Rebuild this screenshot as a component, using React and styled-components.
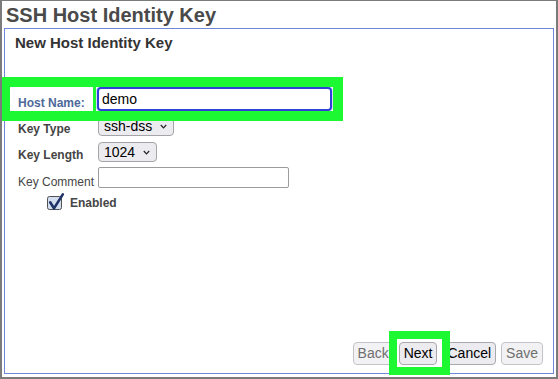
import React from "react";
import styled, { createGlobalStyle } from "styled-components";

const GlobalStyle = createGlobalStyle`
  html, body { margin: 0; padding: 0; background: #fff; }
  body { font-family: "Liberation Sans", Arial, sans-serif; }
  * { box-sizing: border-box; }
`;

const GREEN = "#1cf932";

const Frame = styled.div`
  width: 558px;
  height: 379px;
  border-style: solid;
  border-color: #7b7b7b;
  border-width: 1px 2px 2px 2px;
  display: flex;
  flex-direction: column;
  background: #fff;
  overflow: hidden;
`;

const Title = styled.h1`
  margin: 0;
  padding: 1px 0 0 4px;
  height: 27px;
  font-size: 20px;
  line-height: 26px;
  font-weight: bold;
  color: #4a4a4a;
  white-space: nowrap;
`;

const Panel = styled.section`
  flex: 1;
  margin: 0 2px 3px 2px;
  border: 1px solid #6f85d6;
  display: flex;
  flex-direction: column;
  min-height: 0;
`;

const Subtitle = styled.h2`
  margin: 0;
  padding: 5px 0 0 10px;
  font-size: 15px;
  line-height: 17px;
  font-weight: bold;
  color: #333;
`;

const Form = styled.div`
  margin-top: 36px;
  padding-left: 13px;
  display: flex;
  flex-direction: column;
`;

const Row = styled.div`
  position: relative;
  display: flex;
  align-items: center;
  height: ${(p) => p.$h}px;
  margin-top: ${(p) => p.$mt || 0}px;
`;

const Label = styled.span`
  width: 80px;
  flex: none;
  padding-top: ${(p) => p.$drop || 0}px;
  font-size: 12px;
  font-weight: ${(p) => (p.$normal ? "normal" : "bold")};
  color: ${(p) => (p.$accent ? "#4d6a99" : "#454545")};
  white-space: nowrap;
`;

const HostInput = styled.input`
  width: 235px;
  height: 24px;
  margin-left: -1px;
  padding: 0 0 0 3px;
  border: 2px solid #2f3fd8;
  border-radius: 4px;
  box-shadow: 0 0 0 1px #d6dcf6;
  font-family: inherit;
  font-size: 14px;
  color: #000;
  background: #fff;
  outline: none;
`;

const TextInput = styled.input`
  width: ${(p) => p.$w}px;
  height: 21px;
  padding: 0 3px;
  border: 1px solid #9c9c9c;
  border-radius: 2px;
  font-family: inherit;
  font-size: 14px;
  background: #fff;
  outline: none;
`;

const SelectBox = styled.label`
  display: inline-flex;
  align-items: center;
  width: ${(p) => p.$w}px;
  height: 20px;
  padding: 0 6px 0 5px;
  border: 1px solid #a3a3a8;
  border-radius: 4px;
  background: #ececf0;
`;

const NativeSelect = styled.select`
  appearance: none;
  -webkit-appearance: none;
  flex: 1;
  min-width: 0;
  border: none;
  background: transparent;
  padding: 0;
  margin: 0;
  font-family: inherit;
  font-size: 14px;
  color: #000;
  outline: none;
`;

const HighlightFrame = styled.span`
  position: absolute;
  left: ${(p) => p.$l}px;
  top: ${(p) => p.$t}px;
  width: ${(p) => p.$w}px;
  height: ${(p) => p.$h}px;
  border: ${(p) => p.$b}px solid ${GREEN};
  box-shadow: ${(p) => (p.$ring ? "inset 0 0 0 2px #fff" : "none")};
  pointer-events: none;
  z-index: 2;
`;

const HighlightDivider = styled.span`
  position: absolute;
  left: 83px;
  top: 0;
  bottom: 0;
  width: 3px;
  background: ${GREEN};
`;

const CheckRow = styled.label`
  display: flex;
  align-items: center;
  gap: 8px;
  margin-top: 6px;
  margin-left: 29px;
  height: 18px;
  font-size: 12px;
  font-weight: bold;
  color: #454545;
`;

const CheckIcon = styled.svg`
  flex: none;
  overflow: visible;
`;

const ButtonBar = styled.div`
  margin-top: auto;
  display: flex;
  justify-content: flex-end;
  gap: 5px;
  padding: 0 10px 8px 0;
`;

const Button = styled.button`
  height: 23px;
  padding: 0 4px;
  border: 1px solid ${(p) => (p.disabled ? "#c4c4c8" : "#a9a9ae")};
  border-radius: 4px;
  background: ${(p) => (p.disabled ? "#f2f2f4" : "#ececf0")};
  color: ${(p) => (p.disabled ? "#6f6f6f" : "#000")};
  font-family: inherit;
  font-size: 14px;
  line-height: 21px;
`;

const Spot = styled.span`
  position: relative;
  display: inline-flex;
`;

const Chevron = () => (
  <svg width="7" height="5" viewBox="0 0 7 5">
    <polyline points="0.8,1 3.5,3.8 6.2,1" fill="none" stroke="#222" strokeWidth="1.2" />
  </svg>
);

const Select = ({ w, options, value }) => (
  <SelectBox $w={w}>
    <NativeSelect defaultValue={value}>
      {options.map((o) => (
        <option key={o}>{o}</option>
      ))}
    </NativeSelect>
    <Chevron />
  </SelectBox>
);

export default function App() {
  return (
    <>
      <GlobalStyle />
      <Frame>
        <Title>SSH Host Identity Key</Title>
        <Panel>
          <Subtitle>New Host Identity Key</Subtitle>
          <Form>
            <Row $h={24}>
              <Label $accent $drop={7}>Host Name:</Label>
              <HostInput defaultValue="demo" />
              <HighlightFrame $l={-18} $t={-10} $w={343} $h={44} $b={10}>
                <HighlightDivider />
              </HighlightFrame>
            </Row>
            <Row $h={20} $mt={5}>
              <Label $drop={6}>Key Type</Label>
              <Select w={76} options={["ssh-dss", "ssh-rsa"]} value="ssh-dss" />
            </Row>
            <Row $h={20} $mt={6}>
              <Label $drop={5}>Key Length</Label>
              <Select w={59} options={["1024", "2048"]} value="1024" />
            </Row>
            <Row $h={21} $mt={5}>
              <Label $normal $drop={8}>Key Comment</Label>
              <TextInput $w={191} />
            </Row>
            <CheckRow>
              <CheckIcon width="15" height="14" viewBox="0 0 15 14">
                <rect x="0.5" y="0.5" width="14" height="13" rx="2" fill="#d3def0" stroke="#505050" />
                <path d="M3.2 6.3 L7 12.4 L15.8 -1.6" fill="none" stroke="#1e3266" strokeWidth="2.6" strokeLinecap="round" strokeLinejoin="round" />
              </CheckIcon>
              Enabled
            </CheckRow>
          </Form>
          <ButtonBar>
            <Button disabled>Back</Button>
            <Spot>
              <Button>Next</Button>
              <HighlightFrame $l={-10} $t={-11} $w={61} $h={44} $b={8} $ring />
            </Spot>
            <Button>Cancel</Button>
            <Button disabled>Save</Button>
          </ButtonBar>
        </Panel>
      </Frame>
    </>
  );
}
